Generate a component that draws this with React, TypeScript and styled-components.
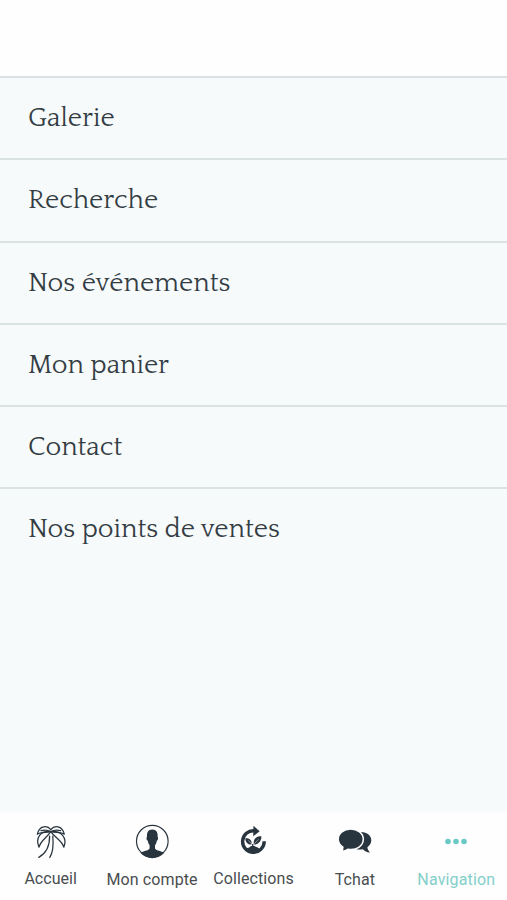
import React from "react";
import styled, { createGlobalStyle } from "styled-components";

const GlobalStyle = createGlobalStyle`
  * { box-sizing: border-box; }
  body { margin: 0; background: #fff; }
`;

const Screen = styled.div`
  display: flex;
  flex-direction: column;
  width: 100%;
  height: 900px;
  overflow: hidden;
  background: #fefefe;
`;

const Header = styled.header`
  flex: 0 0 76px;
`;

const Menu = styled.nav`
  flex: 1;
  min-height: 0;
  background: #f6fafb;
`;

const MenuItem = styled.a`
  display: flex;
  align-items: center;
  height: 82.25px;
  padding: 0 28px;
  border-top: 2px solid #dae2e3;
  color: #343d44;
  font: 27px/32px Quattrocento, "Liberation Serif", serif;
  white-space: nowrap;
`;

const TabBar = styled.footer`
  flex: 0 0 90px;
  display: grid;
  grid-template-columns: repeat(5, 1fr);
  background: linear-gradient(#f7fafb, #fefefe 5px);
`;

const Tab = styled.a<{ $active?: boolean; $drop: number }>`
  display: flex;
  flex-direction: column;
  align-items: center;
  padding-top: 12px;
  gap: ${(p) => p.$drop}px;
  color: ${(p) => (p.$active ? "#6bc9c5" : "#28343e")};
`;

const TabIcon = styled.svg`
  flex: none;
  width: 40px;
  height: 40px;
  overflow: visible;
`;

const TabLabel = styled.span<{ $active?: boolean; $spacing: number }>`
  color: ${(p) => (p.$active ? "#83cfca" : "#494d50")};
  font: 16px/20px Roboto, sans-serif;
  letter-spacing: ${(p) => p.$spacing}px;
  white-space: nowrap;
`;

const PalmIcon = () => (
  <TabIcon viewBox="0 0 40 40" fill="none" stroke="currentColor" strokeWidth="1.25" strokeLinejoin="round" strokeLinecap="round">
    <path d="M19.8 7.6C16.5 3.4 8.5 3 6.3 12.2C9.5 9.6 13.8 10.8 19.8 9.6" />
    <path d="M19.8 9.6C9.5 8.6 4.2 15.5 8 25.2C9.4 18.8 15.2 16.2 19.8 9.6Z" />
    <path d="M10 8.6C13.5 7.6 17 8 19.8 9.6" />
    <path d="M19.8 7.6C23.1 3.4 31.1 3 33.3 12.2C30.1 9.6 25.8 10.8 19.8 9.6" />
    <path d="M19.8 9.6C30.1 8.6 36.6 15.5 32.8 25.2C31.4 18.8 24.4 16.2 19.8 9.6Z" />
    <path d="M29.6 8.6C26.1 7.6 22.6 8 19.8 9.6" />
    <path d="M18.6 14C18.8 23.5 15.5 31 7.8 35.4M21.8 14C22.6 23.5 21.8 31 18.8 35.4" />
  </TabIcon>
);

const AccountIcon = () => (
  <TabIcon viewBox="0 0 40 40">
    <circle cx="20.3" cy="19.2" r="15.8" fill="none" stroke="currentColor" strokeWidth="1.15" />
    <path transform="translate(.3 -.6)" fill="currentColor" d="M20 8C15.8 8 14.3 11 14.7 15.5C13.8 15.8 14.2 19 15.5 19.3C15.8 21.4 16.6 23 17.3 23.8V27.2C16 29.5 10.8 29.7 8 31.4A16 16 0 0 0 32 31.4C29.2 29.7 24 29.5 22.7 27.2V23.8C23.5 22.8 24.2 21.4 24.5 19.3C25.8 19 26.2 15.8 25.3 15.5C25.8 11 24.2 8 20 8Z" />
  </TabIcon>
);

const RecycleIcon = () => (
  <TabIcon viewBox="0 0 40 40">
    <path d="M21.5 8.8A10.8 10.8 0 1 0 31.2 19.3" fill="none" stroke="currentColor" strokeWidth="3.4" />
    <path fill="currentColor" d="M20.5 3.7L26.6 9.2L20.2 14.3Z" />
    <path fill="currentColor" d="M20.8 22.5C20.1 16.6 23.7 13.7 28.4 14.3C28.6 19 25.3 22.6 20.8 22.5ZM18.5 22.6C14.3 22.5 12.3 19.8 12.4 16.2C16.7 16 19.3 18.2 18.5 22.6Z" />
    <path d="M18.8 22L15.3 18.4M21.2 21.8L25.5 17.3" stroke="#fefefe" strokeWidth=".5" />
    <path d="M19.7 22V26" stroke="currentColor" strokeWidth="1.2" />
    <path fill="currentColor" d="M12.5 28C14 25.2 16 26 17 24.7C18.5 23.5 21.5 23.5 22.8 24.7C24.5 25.8 26 25.4 27 28L23 31H16Z" />
  </TabIcon>
);

const ChatIcon = () => (
  <TabIcon viewBox="0 0 40 40" fill="currentColor">
    <path d="M25.5 10C32 9.8 36.5 13.6 36.3 18.6C36.2 21.4 34.7 23.6 32.4 25.2C32.5 27.2 33.6 29 35 30.5C31.8 30.3 29.4 29 27.9 27.2C24.7 28 21.4 27.6 18.8 26.2C26.7 24.7 31.1 16.8 25.5 10Z" />
    <path stroke="#fefefe" strokeWidth="1.5" d="M15.6 7C8.7 7 3.2 11.6 3.2 17.3C3.2 20.8 5.2 23.4 7.9 25.2C8 27.1 7.3 28.5 6.1 29.6C9.4 29.3 11.7 28.4 13.3 27.2C21.3 28.6 28.3 24 28.3 17.3C28.3 11.4 22.6 7 15.6 7Z" />
  </TabIcon>
);

const MoreIcon = () => (
  <TabIcon viewBox="0 0 40 40" fill="currentColor">
    <circle cx="12" cy="19.5" r="2.8" />
    <circle cx="20" cy="19.5" r="2.8" />
    <circle cx="28" cy="19.5" r="2.8" />
  </TabIcon>
);

const menuItems = [
  "Galerie",
  "Recherche",
  "Nos événements",
  "Mon panier",
  "Contact",
  "Nos points de ventes",
];

const tabs = [
  { label: "Accueil", Icon: PalmIcon, drop: 7, spacing: 0.05 },
  { label: "Mon compte", Icon: AccountIcon, drop: 8, spacing: 0.1 },
  { label: "Collections", Icon: RecycleIcon, drop: 7, spacing: 0.1 },
  { label: "Tchat", Icon: ChatIcon, drop: 8, spacing: 0.1 },
  { label: "Navigation", Icon: MoreIcon, drop: 8, spacing: 0.15, active: true },
];

export default function App() {
  return (
    <>
      <GlobalStyle />
      <Screen>
        <Header />
        <Menu>
          {menuItems.map((label) => (
            <MenuItem key={label}>{label}</MenuItem>
          ))}
        </Menu>
        <TabBar>
          {tabs.map(({ label, Icon, drop, spacing, active }) => (
            <Tab key={label} $drop={drop} $active={active}>
              <Icon />
              <TabLabel $spacing={spacing} $active={active}>{label}</TabLabel>
            </Tab>
          ))}
        </TabBar>
      </Screen>
    </>
  );
}
